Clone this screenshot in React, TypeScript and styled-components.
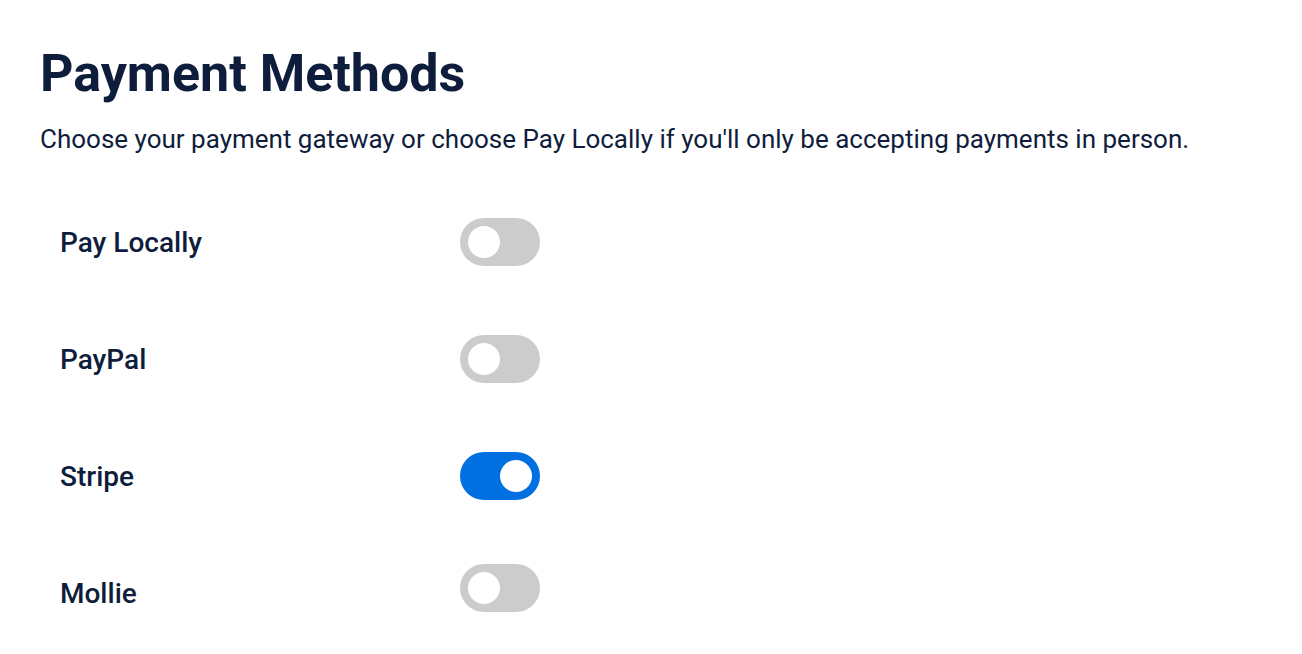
import { useState } from "react";
import styled, { createGlobalStyle } from "styled-components";

const GlobalStyle = createGlobalStyle`
  * {
    box-sizing: border-box;
  }

  body {
    margin: 0;
    background: #ffffff;
    font-family: Roboto, "Liberation Sans", Arial, sans-serif;
    color: #0f1d3c;
  }
`;

const Page = styled.div`
  padding: 43px 40px 40px;
`;

const Title = styled.h1`
  margin: 0;
  font-size: 52px;
  line-height: 62px;
  font-weight: 700;
  color: #0f1d3c;
`;

const Intro = styled.p`
  margin: 16px 0 0;
  font-size: 26px;
  line-height: 36px;
  font-weight: 400;
  color: #0f1d3c;
`;

const MethodList = styled.div`
  display: flex;
  flex-direction: column;
  gap: 69px;
  margin-top: 61px;
`;

const MethodRow = styled.div`
  display: flex;
  align-items: center;
  height: 48px;
  padding-left: 20px;
`;

const MethodName = styled.span`
  width: 400px;
  font-size: 28px;
  font-weight: 500;
  color: #0f1d3c;
`;

const Switch = styled.button<{ $on: boolean; $raise?: boolean }>`
  position: relative;
  flex: none;
  width: 80px;
  height: 48px;
  padding: 0;
  margin-bottom: ${(p) => (p.$raise ? "10px" : "0")};
  border: none;
  border-radius: 24px;
  background: ${(p) => (p.$on ? "#0070e0" : "#cccccc")};
  cursor: pointer;
  transition: background 0.2s;

  &::after {
    content: "";
    position: absolute;
    top: 8px;
    left: ${(p) => (p.$on ? "40px" : "8px")};
    width: 32px;
    height: 32px;
    border-radius: 50%;
    background: #ffffff;
    transition: left 0.2s;
  }
`;

const methods = [
  { id: "local", name: "Pay Locally" },
  { id: "paypal", name: "PayPal" },
  { id: "stripe", name: "Stripe" },
  { id: "mollie", name: "Mollie", raise: true },
];

export default function App() {
  const [active, setActive] = useState<Record<string, boolean>>({
    stripe: true,
  });

  return (
    <Page>
      <GlobalStyle />
      <Title>Payment Methods</Title>
      <Intro>
        Choose your payment gateway or choose Pay Locally if you'll only be
        accepting payments in person.
      </Intro>
      <MethodList>
        {methods.map((m) => (
          <MethodRow key={m.id}>
            <MethodName>{m.name}</MethodName>
            <Switch
              type="button"
              role="switch"
              aria-checked={!!active[m.id]}
              aria-label={m.name}
              $on={!!active[m.id]}
              $raise={m.raise}
              onClick={() => setActive((s) => ({ ...s, [m.id]: !s[m.id] }))}
            />
          </MethodRow>
        ))}
      </MethodList>
    </Page>
  );
}
